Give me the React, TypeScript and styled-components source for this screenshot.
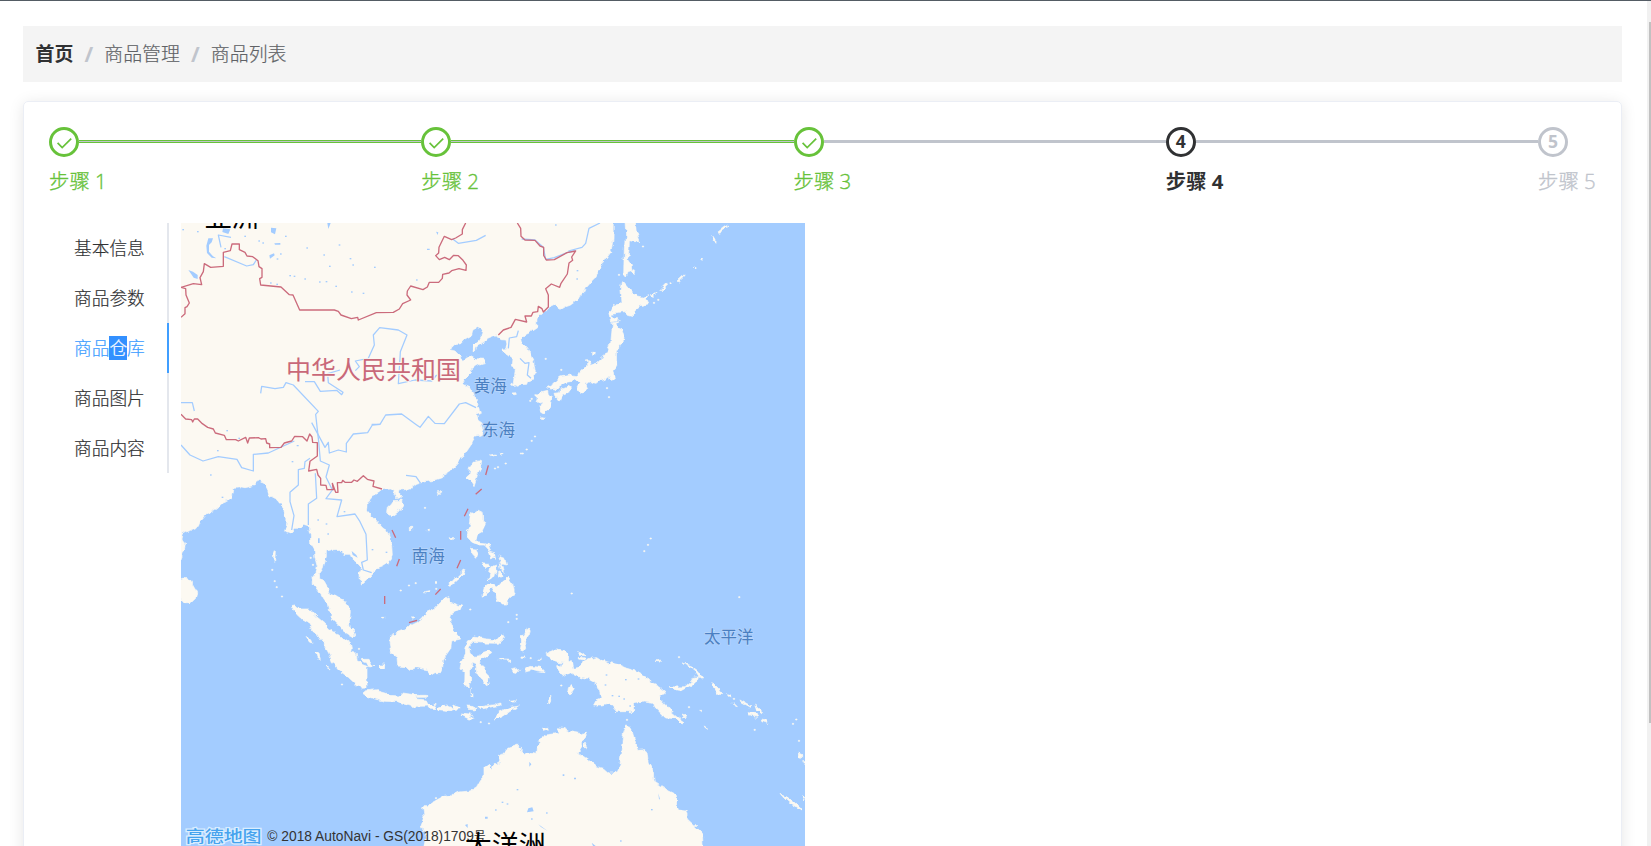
import React from "react";
import styled, { createGlobalStyle } from "styled-components";

const GlobalStyle = createGlobalStyle`
  * { box-sizing: border-box; }
  html, body { margin: 0; padding: 0; height: 846px; overflow: hidden; background: #fff; }
  body { font-family: "Open Sans", "Noto Sans CJK SC", sans-serif; color: #303133; }
`;

const Page = styled.div`
  display: flex;
  height: 846px;
  border-top: 1px solid #545c64;
  overflow: hidden;
`;

const Main = styled.main`
  flex: 1;
  min-width: 0;
  padding: 25px 25px 0 23px;
`;

const ScrollTrack = styled.div`
  width: 4px;
  padding: 21px 0 0 2px;
  background: #f1f1f1;
`;

const ScrollThumb = styled.div`
  height: 701px;
  background: #c1c1c1;
`;

const Breadcrumb = styled.nav`
  display: flex;
  align-items: center;
  height: 56px;
  padding-left: 12.5px;
  background: #f4f4f4;
  font-size: 18.9px;
  line-height: 1;
`;

const Crumb = styled.span<{ $home?: boolean }>`
  font-weight: ${(p) => (p.$home ? 700 : 300)};
  color: ${(p) => (p.$home ? "#303133" : "#606266")};
  -webkit-text-stroke: ${(p) => (p.$home ? "0" : "0.2px")};
`;

const Slash = styled.span`
  width: 31px;
  text-align: center;
  font-size: 21px;
  font-weight: 700;
  color: #c0c4cc;
`;

const Card = styled.section`
  height: 900px;
  margin-top: 19px;
  padding: 25px;
  border: 1px solid #ebeef5;
  border-radius: 5px;
  box-shadow: 0 2px 15px rgba(0, 0, 0, 0.1);
`;

const Steps = styled.div`
  display: flex;
  margin-bottom: 18px;
`;

type Status = "success" | "process" | "wait";
const statusColor: Record<Status, string> = {
  success: "#67c23a",
  process: "#303133",
  wait: "#c0c4cc",
};

const Step = styled.div<{ $status: Status; $last: boolean }>`
  flex: ${(p) => (p.$last ? "0 0 58px" : "1 1 0")};
  color: ${(p) => statusColor[p.$status]};
`;

const StepHead = styled.div`
  display: flex;
  align-items: center;
`;

const StepIcon = styled.div`
  display: flex;
  align-items: center;
  justify-content: center;
  width: 30px;
  height: 30px;
  flex: none;
  border: 3px solid currentColor;
  border-radius: 50%;
  font-size: 17.5px;
  font-weight: 700;
  line-height: 1;
`;

const StepLine = styled.div<{ $done: boolean }>`
  flex: 1;
  height: 3px;
  margin-bottom: 1px;
  background: #c0c4cc;
  border: solid ${(p) => (p.$done ? "#67c23a" : "#c0c4cc")};
  border-width: 1px 0;
`;

const StepTitle = styled.div<{ $bold: boolean }>`
  font-size: 20.4px;
  line-height: 48px;
  white-space: nowrap;
  font-weight: ${(p) => (p.$bold ? 700 : 300)};
  -webkit-text-stroke: ${(p) => (p.$bold ? "0" : "0.35px")};
`;

const Body = styled.div`
  display: flex;
  align-items: flex-start;
`;

const Tabs = styled.div`
  width: 120px;
  margin-right: 12px;
`;

const Tab = styled.div<{ $active: boolean }>`
  height: 50px;
  padding-left: 25px;
  border-right: 2px solid ${(p) => (p.$active ? "#409eff" : "#e4e7ed")};
  color: ${(p) => (p.$active ? "#409eff" : "#303133")};
  font-size: 17.7px;
  font-weight: 300;
  line-height: 50px;
  -webkit-text-stroke: 0.2px;
`;

const Marked = styled.mark`
  display: inline-block;
  height: 24px;
  line-height: 24px;
  background: #3390ff;
  color: #fff;
`;

const MapSvg = styled.svg`
  display: block;
  width: 624px;
  height: 623px;
  flex: none;
  background: #a3ccff;
  font-family: "Noto Sans CJK SC", sans-serif;

  .land { fill: #fcf9f2; stroke: #fcf9f2; stroke-width: 2; stroke-linejoin: round; }
  .sea { fill: #a3ccff; }
  .river { fill: none; stroke: #a3ccff; stroke-width: 3.8; stroke-linejoin: round; }
  .border { fill: none; stroke: #cb6b7c; stroke-width: 4; stroke-linejoin: round; }
  .water-label { fill: #4a80c2; stroke: #b9d6fb; stroke-width: 4; paint-order: stroke; font-size: 49.5px; font-weight: 400; }
  .continent { fill: #000; font-size: 81px; }
`;

/* Map units are one third of a pixel. */
const mainland = `M0 0H1315L1314 75 1308 108 1290 133 1281 146 1275 165 1266 178 1260 188
1243 205 1232 217 1225 234 1210 245 1205 257 1185 271 1170 276 1158 283 1146 276 1140 268 1131 273 1120 278 1104 295
1092 296 1086 312 1085 335 1070 345 1062 354 1043 363 1037 371 1040 386 1050 392 1060 406
1070 428 1076 440 1081 472 1075 482 1078 491 1058 499 1055 508 1035 509 1020 514 1009 514 1015 503 1018 483 1021 465 1012 455
1014 433 997 420 983 411 981 402 993 401 997 393 993 375 978 374 965 362 945 370 933 375 925 382
903 397 902 407 894 407 897 391 911 379 920 362 922 345 908 338 894 344 890 362 873 372 860 386
834 389 827 404 843 408 858 423 862 436 884 427 892 423 909 432 931 433 931 442 913 447
902 453 893 460 886 465 890 475 878 487 862 498 866 508 884 516 893 532 897 548 905 558
906 576 917 584 919 592 905 598 909 613 920 620 925 640 917 660 903 663 893 678 888 690 878 705
866 722 850 735 843 750 825 766 804 778 803 788 778 796 750 800 737 805 722 810 712 818 693 824
675 825 670 832 680 841 677 850 663 850 657 838 661 825 643 822 622 824 610 834 592 844
586 853 576 862 575 885 589 901 603 914 618 934 634 946 641 961 650 989 652 1022 645 1039
624 1052 599 1062 594 1073 579 1090 556 1110 555 1074 562 1061 546 1043 536 1035 527 1021
509 1021 501 1006 474 1007 468 1002 454 1005 454 1028 447 1046 443 1063 433 1077 434 1091 448 1099
457 1115 462 1133 484 1142 503 1154 518 1173 526 1190 523 1217 526 1240 536 1250 540 1265 524 1260
505 1248 490 1230 474 1214 465 1195 461 1174 447 1155 433 1131 415 1107 414 1085 424 1072
427 1052 420 1027 417 1000 407 983 406 960 399 935 386 931 377 940 361 940 349 954 329 947
334 933 336 911 328 901 327 883 315 866 304 852 285 842 280 822 269 801 248 795 238 812 210 818 200 816
192 819 174 820 170 842 161 855 146 860 130 876 107 892 97 896 75 921 70 934 40 949 24 958 21 972 32 985 27 1008 18 1032 0 1040Z`;

const islands = [
  // Sakhalin, Hokkaido, Honshu, Kyushu, Shikoku
  "M1350 14H1380L1384 48 1395 82 1386 84 1363 80 1362 105 1358 130 1368 145 1371 166 1381 168 1380 175 1358 168 1351 186 1346 180 1348 100 1352 60Z",
  "M1343 200L1355 214 1370 232 1384 243 1402 247 1418 239 1412 252 1419 266 1395 272 1380 284 1376 302 1360 298 1352 290 1335 291 1312 295 1311 308 1328 308 1326 318 1307 320 1302 295 1310 286 1316 271 1331 268 1341 260 1338 225Z",
  "M1313 326L1323 326 1326 335 1340 342 1348 360 1346 378 1335 391 1334 404 1324 407 1325 452 1314 466 1318 490 1305 494 1303 482 1287 496 1277 494 1263 505 1242 500 1233 508 1238 520 1220 535 1205 528 1204 514 1213 502 1205 494 1170 500 1150 514 1140 525 1114 519 1135 508 1156 486 1187 480 1206 482 1222 465 1235 452 1235 434 1243 435 1246 451 1265 445 1287 425 1300 400 1307 385Z",
  "M1083 539L1094 540 1101 530 1118 526 1120 538 1132 545 1127 565 1124 580 1112 588 1107 595 1096 588 1095 572 1102 558 1090 562 1083 550Z",
  "M1140 535L1155 533 1155 522 1176 514 1189 520 1186 532 1169 540 1157 545 1153 557 1145 549Z",
  "M1307 324L1333 320 1318 328Z M1253 412l8 0 -2 8 -6 1Z M1010 534l15 -1 2 5 -12 1Z M1100 605l10 2 -6 8Z",
  // Kuril chain
  "M1455 224L1472 207 1478 210 1462 227Z M1506 198L1525 180 1528 184 1510 201Z M1628 52L1645 38 1659 30 1650 43 1634 55Z M1614 64l6 9 0 9 -6 -10Z M1425 240l18 -8 -12 13Z M1484 207l8 -5 -1 5Z M1558 158l8 -4 0 5Z M1580 133l5 -2 0 5Z",
  // Taiwan, Hainan, Luzon, Visayas, Mindanao, Palawan
  "M894 742L911 737 920 740 915 764 907 781 897 812 888 797 879 788 883 762Z",
  "M637 877L645 869 655 857 671 856 677 855 686 867 679 879 668 892 658 899 642 897 635 890Z",
  "M889 896L907 886 925 895 926 917 932 925 920 951 908 957 903 973 914 985 940 988 947 1010 928 990 910 990 890 981 880 970 874 945 884 941 887 920Z",
  "M885 1000L903 1002 910 1015 905 1030 893 1017Z M922 1043L940 1045 945 1055 930 1062Z M940 1010l18 5 4 18 -8 -6 -7 5Z M970 1020l20 8 5 25 -12 -3 -7 -13Z M948 1055l16 -5 2 25 -10 -5 -4 20 -10 5 2 -20Z M973 1043l11 14 4 15 -12 -10Z M965 1080l12 -8 4 10 -10 5Z",
  "M921 1140L928 1118 945 1105 960 1115 980 1103 990 1095 1001 1084 1012 1100 1018 1130 1009 1150 1000 1150 997 1170 983 1170 968 1160 963 1140 952 1122 935 1133 922 1150Z",
  "M820 1112L840 1090 860 1071 873 1063 865 1077 845 1095 825 1114Z",
  // Ceylon
  "M30 1087L46 1097 57 1117 65 1130 62 1150 48 1163 29 1163 20 1153 10 1140 10 1095Z",
  // Sumatra, Java, lesser Sunda islands
  "M352 1175L362 1173 376 1182 404 1182 426 1206 447 1223 464 1241 490 1259 510 1275 526 1285 529 1300 527 1312 543 1314 547 1340 560 1348 576 1354 576 1419 562 1420 544 1409 520 1387 490 1365 474 1345 463 1318 442 1280 426 1258 412 1244 398 1222 379 1211 365 1198Z",
  "M575 1427L604 1424 632 1432 639 1441 670 1443 684 1434 722 1440 724 1452 754 1455 763 1473 735 1474 708 1474 671 1460 628 1459 584 1448 566 1435Z",
  "M725 1441h27v6h-27Z M760 1468l25 5 -3 8 -22 -2Z M792 1476l20 -6 20 8 -4 9 -36 -3Z M834 1470l12 6 14 5 -28 3Z M878 1473l20 2 8 10 -28 -2Z M906 1477l32 -5 20 -3 -4 6 -40 9Z M858 1494l26 3 10 16 -14 -2 -18 -9Z M949 1473l28 -6 2 4 -26 4Z M955 1515l15 -23 28 -13 35 -6 -20 10 -30 20 -24 12Z",
  "M393 1263l12 6 6 16 -8 -4Z M422 1312l10 5 4 16 -10 -5Z M455 1350l7 12 -6 -4Z M563 1330l16 0 12 16 5 10 -15 -1 -6 -12 -12 -4Z M613 1350l16 0 -1 9 -12 1Z",
  // Borneo
  "M690 1245L705 1230 725 1223 742 1210 756 1192 780 1180 796 1163 810 1148 825 1145 828 1160 843 1169 860 1173 855 1185 830 1198 824 1220 832 1242 845 1258 857 1272 830 1278 827 1300 815 1318 805 1333 803 1355 797 1373 783 1373 768 1382 758 1365 738 1361 722 1358 706 1366 695 1355 668 1353 666 1325 648 1312 642 1282 650 1259 663 1252Z",
  // Sulawesi and Moluccas
  "M876 1288L880 1275 898 1266 935 1272 965 1275 980 1258 988 1254 982 1274 970 1285 920 1284 890 1282 883 1298 885 1312 893 1318 900 1324 915 1322 925 1312 945 1306 950 1313 930 1325 915 1338 922 1350 930 1358 933 1375 943 1385 940 1398 925 1398 914 1388 905 1372 903 1350 890 1345 886 1365 887 1405 880 1415 866 1412 867 1370 855 1362 858 1342 868 1325Z",
  "M888 1418l3 26 -3 0Z M925 1400l14 -8 4 14 -8 6Z M970 1331l38 2 -2 10 -4 -7 -32 -2Z M1008 1362l18 -4 8 6 -8 11 -12 -2Z M1048 1362l18 -8 32 3 12 13 -22 -3 -18 -4 -20 5Z M1057 1238L1063 1245 1060 1262 1048 1278 1052 1300 1047 1308 1036 1305 1040 1280 1038 1262 1048 1260Z M1038 1326h12v4h-12Z M1180 1420l8 -15 3 10 8 7 -12 17 -9 -5Z M1118 1455l10 -8 -2 12 -8 6Z M1003 1459l18 -2 0 4 -15 0Z M1087 1332l12 1 -2 3Z",
  // New Guinea, Bismarck archipelago, Solomon islands
  "M1108 1318L1120 1312 1145 1302 1168 1306 1181 1320 1180 1338 1193 1343 1196 1360 1208 1358 1220 1345 1240 1335 1258 1328 1265 1328 1276 1335 1330 1349 1355 1360 1387 1369 1423 1389 1425 1403 1452 1416 1470 1430 1471 1440 1454 1443 1456 1455 1474 1473 1490 1490 1512 1508 1528 1519 1518 1524 1505 1511 1472 1509 1456 1493 1442 1479 1432 1462 1406 1458 1375 1463 1376 1484 1367 1490 1328 1490 1315 1475 1305 1464 1280 1470 1256 1470 1264 1455 1278 1450 1274 1430 1263 1405 1245 1395 1218 1388 1202 1382 1184 1372 1177 1374 1165 1382 1152 1369 1148 1352 1163 1352 1165 1343 1140 1342 1125 1330Z",
  "M1208 1310l18 7 6 5 -16 -1Z M1213 1327l20 3 -2 6 -18 -4Z M1443 1338l14 -3 -2 6 -10 -1Z",
  "M1485 1415L1505 1416 1530 1415 1547 1400 1556 1386 1570 1386 1568 1397 1545 1412 1518 1427 1500 1424Z M1521 1344l18 8 20 12 16 25 8 0 -15 -22 -22 -16Z",
  "M1613 1403L1630 1420 1643 1439 1630 1438 1616 1418Z M1655 1436l14 5 2 6 -15 -7Z M1695 1454l35 20 -3 3 -30 -17Z M1742 1470l12 11 9 17 -4 1 -12 -15Z M1722 1493l20 2 6 12 -18 -3Z M1762 1512l15 6 2 7 -14 -4Z M1675 1466l12 12 -5 -1Z M1585 1535l13 7 -4 2Z M1571 1486l10 0 -2 4Z M1518 1500l14 6 -8 3Z",
  // New Caledonia
  "M1818 1735L1845 1752 1880 1780 1877 1784 1850 1768 1827 1747Z M1869 1613l14 7 0 10 -10 -2Z M1880 1743l10 5 0 10Z M1886 1640l4 0 0 10Z",
  // Australia
  "M745 1903L752 1870 748 1850 738 1830 747 1805 743 1775 757 1775 770 1762 800 1745 830 1742 854 1731 885 1728 905 1715 916 1695 927 1682 927 1658 942 1648 950 1665 958 1645 962 1648 974 1640 974 1620 990 1616 998 1600 1027 1590 1050 1616 1056 1612 1083 1618 1084 1596 1098 1575 1110 1560 1148 1555 1150 1538 1165 1540 1183 1550 1220 1556 1230 1550 1234 1560 1222 1578 1222 1592 1208 1614 1240 1635 1265 1655 1286 1660 1302 1674 1324 1674 1335 1650 1340 1590 1345 1555 1355 1525 1370 1545 1380 1577 1388 1603 1403 1602 1416 1613 1420 1645 1435 1670 1437 1700 1455 1712 1480 1728 1500 1738 1505 1765 1510 1785 1532 1788 1540 1815 1565 1838 1582 1854 1585 1903Z",
  "M1098 1540l20 -3 2 6 -18 3Z M1232 1585l5 8 -4 9 -4 -3Z M296 1010l8 -3 -2 35 -6 -8Z M780 1100h6v5h-6Z M790 830h7v5h-7Z M826 965h6v6h-6Z M757 942h6v5h-6Z M703 937h7v7h-7Z M623 1207h6v5h-6Z M945 720l16 -3 0 4 -14 4Z M973 718l8 -3 -1 7Z M745 1130l20 -3 -2 5Z M710 1205l7 2 -4 6Z",
];

const rivers = [
  "M138 97L130 60 168 67M148 125L215 153 235 149 244 135M833 72L850 85 904 76 932 61",
  "M1180 108L1221 97 1232 85 1242 40 1275 24M1040 72L1080 75 1105 97 1112 133 1138 128 1178 112 1202 107",
  "M541 467L553 455 541 438 580 430 598 390 595 360 614 338 670 345 696 360 676 410 675 430 670 506 720 495 770 498 785 480",
  "M257 535L260 514 300 521 325 517 333 503 355 510 430 589 422 598 431 680 436 738 463 750 453 786 472 825 453 851 500 855 486 905 540 897 555 920 573 958 577 1035 560 1042 565 1065 590 1073",
  "M390 500L418 500 436 529 485 526 500 539 504 532 460 503 458 476 495 465",
  "M590 628L615 628 632 600 680 597 725 630 735 637 760 604 780 625 808 626 853 567 872 563 903 578",
  "M410 623L450 697 460 682 463 714 490 705 514 711 514 685 535 657 578 653 592 630 615 628",
  "M18 563L52 563 58 588M18 690L45 720 84 738 130 725 186 733 200 758 235 768 235 718 280 714 358 678",
  "M405 730L390 740 388 760 370 764 370 810 345 832 345 860 357 902 350 945M421 775L425 850 400 867 400 930",
  "M693 781L723 785 737 805M1030 347L1025 365 1003 369 1000 400M1035 430L1050 445 1062 443 1057 480 1068 490",
];

const lakes = [
  "M40 165l14 5 14 10 0 12 -12 -4 -8 -12Z M100 70l14 0 -4 12 -8 8 0 20 12 14 10 6 -14 -2 -14 -14 -2 -22Z M288 38l16 2 -4 18 -12 -6Z M457 24h10l-7 18Z M144 40l22 3 -6 14 -18 -6Z",
  "M283 121l14 -6 2 6 -14 10Z M783 50l7 2 -2 8Z M298 85l18 -1 0 5 -16 0Z M756 101h8v4h-8Z M530 1008l14 12 4 8 -15 -8Z M429 970l5 0 0 14 -5 0Z M365 690h6v4h-6Z",
  "M1060 1780l12 -3 4 12 -20 3Z M1063 1640l6 8 -6 7Z M1090 1828l28 20 -20 -12Z M1163 1678h5v5h-5Z M1197 1688h6v5h-6Z M1250 1883l12 10 -8 0Z M1450 1735l5 18 -3 0Z M930 1805h8v6h-8Z M870 1830l8 -3 0 12Z",
];

const specks: [number, number][] = [
  [22, 42], [66, 48], [208, 62], [250, 76], [330, 62], [394, 97], [491, 88], [445, 118], [524, 129], [532, 148],
  [597, 155], [462, 152], [305, 130], [315, 115], [343, 180], [356, 182], [388, 190], [432, 199], [452, 198], [481, 212],
  [528, 229], [563, 233], [285, 202], [304, 206], [723, 193], [262, 82], [148, 99], [1205, 165], [1204, 190], [1140, 28],
  [126, 705], [154, 645], [190, 668], [350, 738], [105, 778], [140, 845], [506, 888], [452, 925], [457, 955], [427, 913],
  [590, 1002], [632, 1010], [1289, 1408], [1292, 1378], [1350, 1392], [1388, 1390], [1310, 1440], [1330, 1442], [1345, 1450], [1363, 1471],
  [1025, 1722], [980, 1760], [995, 1765], [1068, 1810], [1113, 1792], [960, 1783], [1335, 1876], [1428, 1782],
];

const islets: [number, number][] = [
  [1330, 178], [1402, 93], [1435, 262], [1448, 253], [1110, 430], [1157, 463], [1294, 518], [1300, 545], [1068, 550], [1064, 556],
  [1078, 663], [1068, 676], [1053, 702], [1036, 714], [1041, 714], [990, 744], [958, 759], [967, 755], [1425, 969], [1417, 988],
  [1406, 1007], [1188, 1134], [1691, 1145], [1023, 1198], [1023, 1210], [998, 1220], [1060, 1240], [1510, 1325], [1540, 1475], [1737, 1543],
  [1862, 1512], [1852, 1525], [1870, 1576], [1675, 1450], [290, 1063], [297, 1097], [303, 1115], [319, 1143], [405, 1027], [412, 1048],
  [675, 1125], [700, 1110], [720, 1103], [748, 877], [782, 1120], [884, 1182], [915, 1520], [940, 1524], [499, 1407], [781, 1748],
  [1354, 1513], [1157, 1410], [550, 1300], [1065, 1328], [1613, 1245],
];

const borders = [
  "M18 217L55 206 80 209 75 188 85 170 88 146 107 157 145 154 145 112 166 107 171 87H193V104L210 112 216 123 233 125 249 137 252 155 261 161 261 187 254 191 257 210 318 216 343 239 354 240 374 285H478L490 289 498 300 529 311 548 307 550 315 604 293 655 292 673 282 683 266 707 255 696 240 697 228 707 213 744 224 757 216 763 202 791 202 802 190 803 178 822 174 830 167 852 161 873 166 874 150 864 136 850 122 836 121 823 134 809 127 793 134 782 122 791 114 792 97 808 64 830 74 842 69 862 57 862 44 872 24",
  "M18 217L32 221 33 240 43 264 36 275 30 278 30 296 18 307",
  "M1027 24L1037 40 1038 64 1050 75 1080 76 1095 93 1106 97 1106 121 1114 135 1138 134 1176 113 1202 108 1190 126 1193 136 1182 144 1177 177 1158 205 1154 217 1129 207 1112 221 1120 240 1120 276 1105 291 1101 281 1090 274 1088 290 1074 292 1069 303 1050 303 1055 321 1021 313 1008 337 985 345 970 360",
  "M18 598L32 612 50 614 53 621 58 612 68 612 82 626 98 637 115 642 121 654 148 661 154 674 182 674 190 678 212 667 218 684 223 669 250 668 258 672 272 671 275 684 284 687 284 698 318 697 328 684 350 678 359 664 383 665 396 678 404 657 411 666 413 682 427 683 427 723 405 739 401 768 425 763 429 780 437 790 437 810 453 811 456 824 475 824 472 805 482 832 489 832 487 803 500 803 503 796 510 802 530 802 537 795 547 799 565 782 577 793 597 798 594 814 621 822",
  "M940 751L932 780M920 822L902 838M879 881L868 904M857 948V974M857 1035L846 1060M797 1122L781 1139M726 1216L702 1223M629 1143V1167M673 1032L665 1054M651 945L662 968",
];

const MapView = () => (
  <MapSvg viewBox="18 24 1872 1869">
    <defs>
      {/* Breaks up the straight runs between coast points */}
      <filter id="coast" filterUnits="userSpaceOnUse" x="0" y="0" width="1910" height="1910">
        <feTurbulence type="fractalNoise" baseFrequency="0.055" numOctaves={2} seed={4} />
        <feDisplacementMap in="SourceGraphic" scale="17" xChannelSelector="R" yChannelSelector="G" />
      </filter>
    </defs>
    <g filter="url(#coast)">
      <path className="land" d={mainland} />
      {islands.map((d) => <path key={d} className="land" d={d} />)}
    </g>
    {islets.map(([x, y]) => <rect key={`${x}-${y}`} className="land" x={x} y={y} width="4" height="3" />)}
    {lakes.map((d) => <path key={d} className="sea" d={d} />)}
    {specks.map(([x, y]) => <rect key={`${x}-${y}`} className="sea" x={x} y={y} width="5" height="4" />)}
    {rivers.map((d) => <path key={d} className="river" d={d} />)}
    {borders.map((d) => <path key={d} className="border" d={d} />)}
    <text x="333" y="491" fontSize="75" fill="#c96879" stroke="#fcf9f2" strokeWidth="5" paintOrder="stroke">中华人民共和国</text>
    <text className="water-label" x="896" y="532">黄海</text>
    <text className="water-label" x="921" y="662">东海</text>
    <text className="water-label" x="710" y="1041">南海</text>
    <text className="water-label" x="1587" y="1284">太平洋</text>
    <text className="continent" x="89" y="35">亚洲</text>
    <text transform="translate(32 1880) scale(1 0.82)" fontSize="57" fontWeight="500" fill="#46a3ee" stroke="#d9edff" strokeWidth="9" paintOrder="stroke">高德地图</text>
    <text x="277" y="1878" fontSize="41.4" fill="#333" fontFamily="'Liberation Sans', 'Noto Sans CJK SC', sans-serif">
      © 2018 AutoNavi - GS(2018)1709<tspan fontSize="36">号</tspan>
    </text>
    <text className="continent" x="869" y="1920">大洋洲</text>
  </MapSvg>
);

const steps: Status[] = ["success", "success", "success", "process", "wait"];
const tabs = ["基本信息", "商品参数", "商品仓库", "商品图片", "商品内容"];

const Check = () => (
  <svg width="16" height="16" viewBox="0 0 16 16" fill="none" stroke="currentColor" strokeWidth="1.7">
    <path d="M1.6 8.9L6.2 13.6L15.2 4.6" />
  </svg>
);

export default function App() {
  return (
    <>
      <GlobalStyle />
      <Page>
        <Main>
          <Breadcrumb>
            <Crumb $home>首页</Crumb>
            <Slash>/</Slash>
            <Crumb>商品管理</Crumb>
            <Slash>/</Slash>
            <Crumb>商品列表</Crumb>
          </Breadcrumb>
          <Card>
            <Steps>
              {steps.map((status, i) => (
                <Step key={i} $status={status} $last={i === steps.length - 1}>
                  <StepHead>
                    <StepIcon>{status === "success" ? <Check /> : i + 1}</StepIcon>
                    {i < steps.length - 1 && <StepLine $done={i < 2} />}
                  </StepHead>
                  <StepTitle $bold={status === "process"}>步骤 {i + 1}</StepTitle>
                </Step>
              ))}
            </Steps>
            <Body>
              <Tabs>
                {tabs.map((label, i) => (
                  <Tab key={label} $active={i === 2}>
                    {i === 2 ? <>商品<Marked>仓</Marked>库</> : label}
                  </Tab>
                ))}
              </Tabs>
              <MapView />
            </Body>
          </Card>
        </Main>
        <ScrollTrack>
          <ScrollThumb />
        </ScrollTrack>
      </Page>
    </>
  );
}
